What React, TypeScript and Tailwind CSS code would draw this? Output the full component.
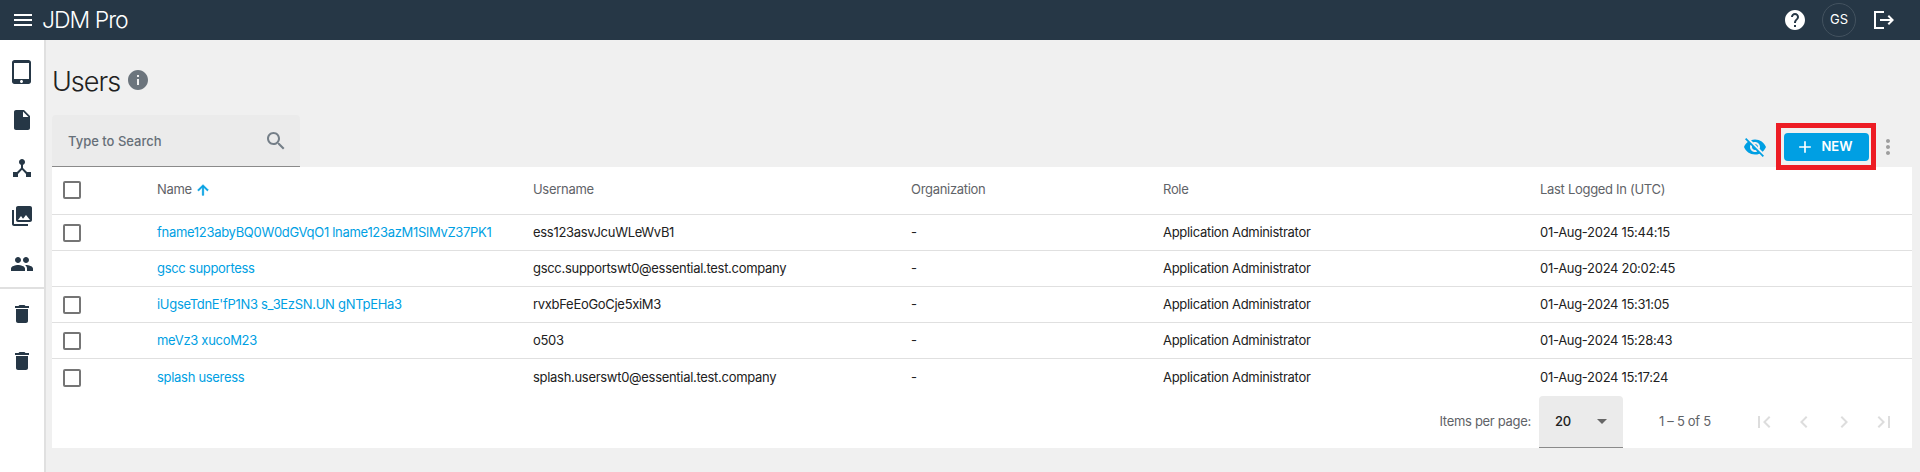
import React from "react";

// material icon paths, 24 x 24 viewBox
const paths = {
  tablet:
    "M18.5 0h-14C3.12 0 2 1.12 2 2.5v19C2 22.88 3.12 24 4.5 24h14c1.38 0 2.5-1.12 2.5-2.5v-19C21 1.12 19.88 0 18.5 0zm-7 23c-.83 0-1.5-.67-1.5-1.5s.67-1.5 1.5-1.5 1.5.67 1.5 1.5-.67 1.5-1.5 1.5zm7.5-4H4V3h15v16z",
  file: "M6 2c-1.1 0-1.99.9-1.99 2L4 20c0 1.1.89 2 1.99 2H18c1.1 0 2-.9 2-2V8l-6-6H6zm7 7V3.5L18.5 9H13z",
  hub: "M17 16l-4-4V8.82C14.16 8.4 15 7.3 15 6c0-1.66-1.34-3-3-3S9 4.34 9 6c0 1.3.84 2.4 2 2.82V12l-4 4H3v5h5v-3.05l4-4.2 4 4.2V21h5v-5h-4z",
  photos:
    "M22 16V4c0-1.1-.9-2-2-2H8c-1.1 0-2 .9-2 2v12c0 1.1.9 2 2 2h12c1.1 0 2-.9 2-2zm-11-4l2.03 2.71L16 11l4 5H8l3-4zM2 6v14c0 1.1.9 2 2 2h14v-2H4V6H2z",
  people:
    "M16 11c1.66 0 2.99-1.34 2.99-3S17.66 5 16 5c-1.66 0-3 1.34-3 3s1.34 3 3 3zm-8 0c1.66 0 2.99-1.34 2.99-3S9.66 5 8 5C6.34 5 5 6.34 5 8s1.34 3 3 3zm0 2c-2.33 0-7 1.17-7 3.5V19h14v-2.5c0-2.33-4.67-3.5-7-3.5zm8 0c-.29 0-.62.02-.97.05 1.16.84 1.97 1.97 1.97 3.45V19h6v-2.5c0-2.33-4.67-3.5-7-3.5z",
  trash: "M6 19c0 1.1.9 2 2 2h8c1.1 0 2-.9 2-2V7H6v12zM19 4h-3.5l-1-1h-5l-1 1H5v2h14V4z",
  help: "M12 2C6.48 2 2 6.48 2 12s4.48 10 10 10 10-4.48 10-10S17.52 2 12 2zm1 17h-2v-2h2v2zm2.07-7.75l-.9.92C13.45 12.9 13 13.5 13 15h-2v-.5c0-1.1.45-2.1 1.17-2.83l1.24-1.26c.37-.36.59-.86.59-1.41 0-1.1-.9-2-2-2s-2 .9-2 2H8c0-2.21 1.79-4 4-4s4 1.79 4 4c0 .88-.36 1.68-.93 2.25z",
  logout: "M17 7l-1.41 1.41L18.17 11H8v2h10.17l-2.58 2.58L17 17l5-5zM12 5V3H2v18h10v-2H4V5z",
  eyeOff:
    "M12 7c2.76 0 5 2.24 5 5 0 .65-.13 1.26-.36 1.83l2.92 2.92c1.51-1.26 2.7-2.89 3.43-4.75-1.73-4.39-6-7.5-11-7.5-1.4 0-2.74.25-3.98.7l2.16 2.16C10.74 7.13 11.35 7 12 7zM2 4.27l2.28 2.28.46.46C3.08 8.3 1.78 10.02 1 12c1.73 4.39 6 7.5 11 7.5 1.55 0 3.03-.3 4.38-.84l.42.42L19.73 22 21 20.73 3.27 3 2 4.27zM7.53 9.8l1.55 1.55c-.05.21-.08.43-.08.65 0 1.66 1.34 3 3 3 .22 0 .44-.03.65-.08l1.55 1.55c-.67.33-1.41.53-2.2.53-2.76 0-5-2.24-5-5 0-.79.2-1.53.53-2.2zm4.31-.78l3.15 3.15.02-.16c0-1.66-1.34-3-3-3l-.17.01z",
  search:
    "M15.5 14h-.79l-.28-.27C15.41 12.59 16 11.11 16 9.5 16 5.91 13.09 3 9.5 3S3 5.91 3 9.5 5.91 16 9.5 16c1.61 0 3.09-.59 4.23-1.57l.27.28v.79l5 4.99L20.49 19l-4.99-5zm-6 0C7.01 14 5 11.99 5 9.5S7.01 5 9.5 5 14 7.01 14 9.5 11.99 14 9.5 14z",
  info: "M12 2C6.48 2 2 6.48 2 12s4.48 10 10 10 10-4.48 10-10S17.52 2 12 2zm1 15h-2v-6h2v6zm0-8h-2V7h2v2z",
  arrowUp: "M4 12l1.41 1.41L11 7.83V20h2V7.83l5.58 5.59L20 12l-8-8-8 8z",
  plus: "M19 13h-6v6h-2v-6H5v-2h6V5h2v6h6v2z",
  dots: "M12 8c1.1 0 2-.9 2-2s-.9-2-2-2-2 .9-2 2 .9 2 2 2zm0 2c-1.1 0-2 .9-2 2s.9 2 2 2 2-.9 2-2-.9-2-2-2zm0 6c-1.1 0-2 .9-2 2s.9 2 2 2 2-.9 2-2-.9-2-2-2z",
  first: "M18.41 16.59L13.82 12l4.59-4.59L17 6l-6 6 6 6zM6 6h2v12H6z",
  prev: "M15.41 7.41L14 6l-6 6 6 6 1.41-1.41L10.83 12z",
  next: "M10 6L8.59 7.41 13.17 12l-4.58 4.59L10 18l6-6z",
  last: "M5.59 7.41L10.18 12l-4.59 4.59L7 18l6-6-6-6zM16 6h2v12h-2z",
};

function Icon({ d, className }: { d: string; className?: string }) {
  return (
    <svg viewBox="0 0 24 24" fill="currentColor" className={className}>
      <path d={d} />
    </svg>
  );
}

function Checkbox() {
  return <div className="h-[18px] w-[18px] rounded-[2px] border-2 border-[#757575]" />;
}

const users = [
  {
    name: "fname123abyBQ0W0dGVqO1 lname123azM1SlMvZ37PK1",
    username: "ess123asvJcuWLeWvB1",
    login: "01-Aug-2024 15:44:15",
    check: true,
  },
  {
    name: "gscc supportess",
    username: "gscc.supportswt0@essential.test.company",
    login: "01-Aug-2024 20:02:45",
    check: false,
  },
  {
    name: "iUgseTdnE'fP1N3 s_3EzSN.UN gNTpEHa3",
    username: "rvxbFeEoGoCje5xiM3",
    login: "01-Aug-2024 15:31:05",
    check: true,
  },
  {
    name: "meVz3 xucoM23",
    username: "o503",
    login: "01-Aug-2024 15:28:43",
    check: true,
  },
  {
    name: "splash useress",
    username: "splash.userswt0@essential.test.company",
    login: "01-Aug-2024 15:17:24",
    check: true,
  },
];

const rowGrid = "grid grid-cols-[105px_376px_378px_252px_377px_1fr] items-center";

function SideIcon({ d }: { d: string }) {
  return (
    <div className="flex h-[48px] items-center justify-center text-[#263746]">
      <Icon d={d} className="h-6 w-6" />
    </div>
  );
}

export default function App() {
  return (
    <div className="flex h-[472px] flex-col overflow-hidden bg-[#f0f0f0] font-['Inter',sans-serif] text-[13px] tracking-[-0.3px] text-[#212121]">
      <header className="flex h-10 shrink-0 items-center bg-[#263746] text-white">
        <div className="flex w-[43px] justify-center pl-[2px]">
          <div className="flex h-[12px] w-[18px] flex-col justify-between">
            <div className="h-[2px] bg-white" />
            <div className="h-[2px] bg-white" />
            <div className="h-[2px] bg-white" />
          </div>
        </div>
        <span className="-ml-px text-[23px] font-light tracking-[-1px]">JDM Pro</span>
        <div className="ml-auto flex items-center pr-[24px]">
          <Icon d={paths.help} className="h-6 w-6" />
          <div className="ml-[15px] flex h-[34px] w-[34px] items-center justify-center rounded-full border border-[#43525f] text-[13px] tracking-normal">
            GS
          </div>
          <Icon d={paths.logout} className="ml-[16px] h-6 w-6" />
        </div>
      </header>

      <div className="flex min-h-0 flex-1">
        <aside className="w-[46px] shrink-0 border-r-2 border-[#e0e0e0] bg-white pt-[8px]">
          <SideIcon d={paths.tablet} />
          <SideIcon d={paths.file} />
          <SideIcon d={paths.hub} />
          <SideIcon d={paths.photos} />
          <SideIcon d={paths.people} />
          <div className="mt-[-1px] mb-[1px] h-[2px] w-full bg-[#e0e0e0]" />
          <SideIcon d={paths.trash} />
          <div className="-mt-px">
            <SideIcon d={paths.trash} />
          </div>
        </aside>

        <main className="min-w-0 flex-1 pr-2 pl-[6px]">
          <div className="flex h-[75px] items-center pt-[9px]">
            <h1 className="text-[27px] font-light tracking-[-1px] text-[#212121]">Users</h1>
            <Icon d={paths.info} className="mb-[4px] ml-[6px] h-6 w-6 text-[#6c757d]" />
          </div>

          <div className="flex items-end justify-between">
            <div className="flex h-[52px] w-[248px] items-center justify-between rounded-t-[4px] border-b border-[#8a8a8a] bg-[#ebebeb] pr-[12px] pl-4">
              <span className="pt-[2px] text-[13px] font-medium tracking-normal text-[#666f78]">Type to Search</span>
              <Icon d={paths.search} className="h-6 w-6 text-[#757f88]" />
            </div>
            <div className="relative z-10 -mb-[3px] flex items-center pr-[12px]">
              <Icon d={paths.eyeOff} className="mr-[9px] h-6 w-6 text-[#009fe3]" />
              <div className="flex h-[47px] w-[100px] items-center justify-center border-[5px] border-[#ed1c24]">
                <button className="flex h-[28px] w-[85px] items-center rounded-[4px] bg-[#009fe3] pl-[11px] text-[13px] font-semibold tracking-normal text-white">
                  <Icon d={paths.plus} className="mr-[7px] h-5 w-5" />
                  NEW
                </button>
              </div>
              <Icon d={paths.dots} className="h-6 w-6 text-[#9e9e9e]" />
            </div>
          </div>

          <div className="bg-white">
            <div className={`${rowGrid} h-[48px] border-b border-[#e0e0e0] pb-[2px] text-[#5f6368]`}>
              <div className="pl-[11px]">
                <Checkbox />
              </div>
              <div className="flex items-center">
                Name
                <svg viewBox="0 0 24 24" className="ml-[3px] h-4 w-4 fill-[#009fe3] stroke-[#009fe3] stroke-1">
                  <path d={paths.arrowUp} />
                </svg>
              </div>
              <div>Username</div>
              <div>Organization</div>
              <div>Role</div>
              <div>Last Logged In (UTC)</div>
            </div>

            {users.map((u, i) => (
              <div
                key={u.username}
                className={
                  i === users.length - 1
                    ? `${rowGrid} h-[37px]`
                    : `${rowGrid} h-[36px] border-b border-[#e0e0e0]`
                }
              >
                <div className="pl-[11px]">{u.check && <Checkbox />}</div>
                <div className="text-[#009fe3]">{u.name}</div>
                <div>{u.username}</div>
                <div>-</div>
                <div>Application Administrator</div>
                <div>{u.login}</div>
              </div>
            ))}

            <div className="flex h-[52px] items-center justify-end">
              <span className="mr-[8px] text-[#5f6368]">Items per page:</span>
              <div className="flex h-[52px] w-[84px] items-center justify-between rounded-t-[4px] border-b border-[#8a8a8a] bg-[#ebebeb] pr-[16px] pl-4 font-medium">
                20
                <div className="h-0 w-0 border-x-[5px] border-t-[5px] border-x-transparent border-t-[#666]" />
              </div>
              <span className="mr-[40px] ml-[36px] w-[53px] text-[#5f6368]">1 – 5 of 5</span>
              <div className="mr-[16px] flex gap-4 text-[#dddddd]">
                <Icon d={paths.first} className="h-6 w-6" />
                <Icon d={paths.prev} className="h-6 w-6" />
                <Icon d={paths.next} className="h-6 w-6" />
                <Icon d={paths.last} className="h-6 w-6" />
              </div>
            </div>
          </div>
        </main>
      </div>
    </div>
  );
}
